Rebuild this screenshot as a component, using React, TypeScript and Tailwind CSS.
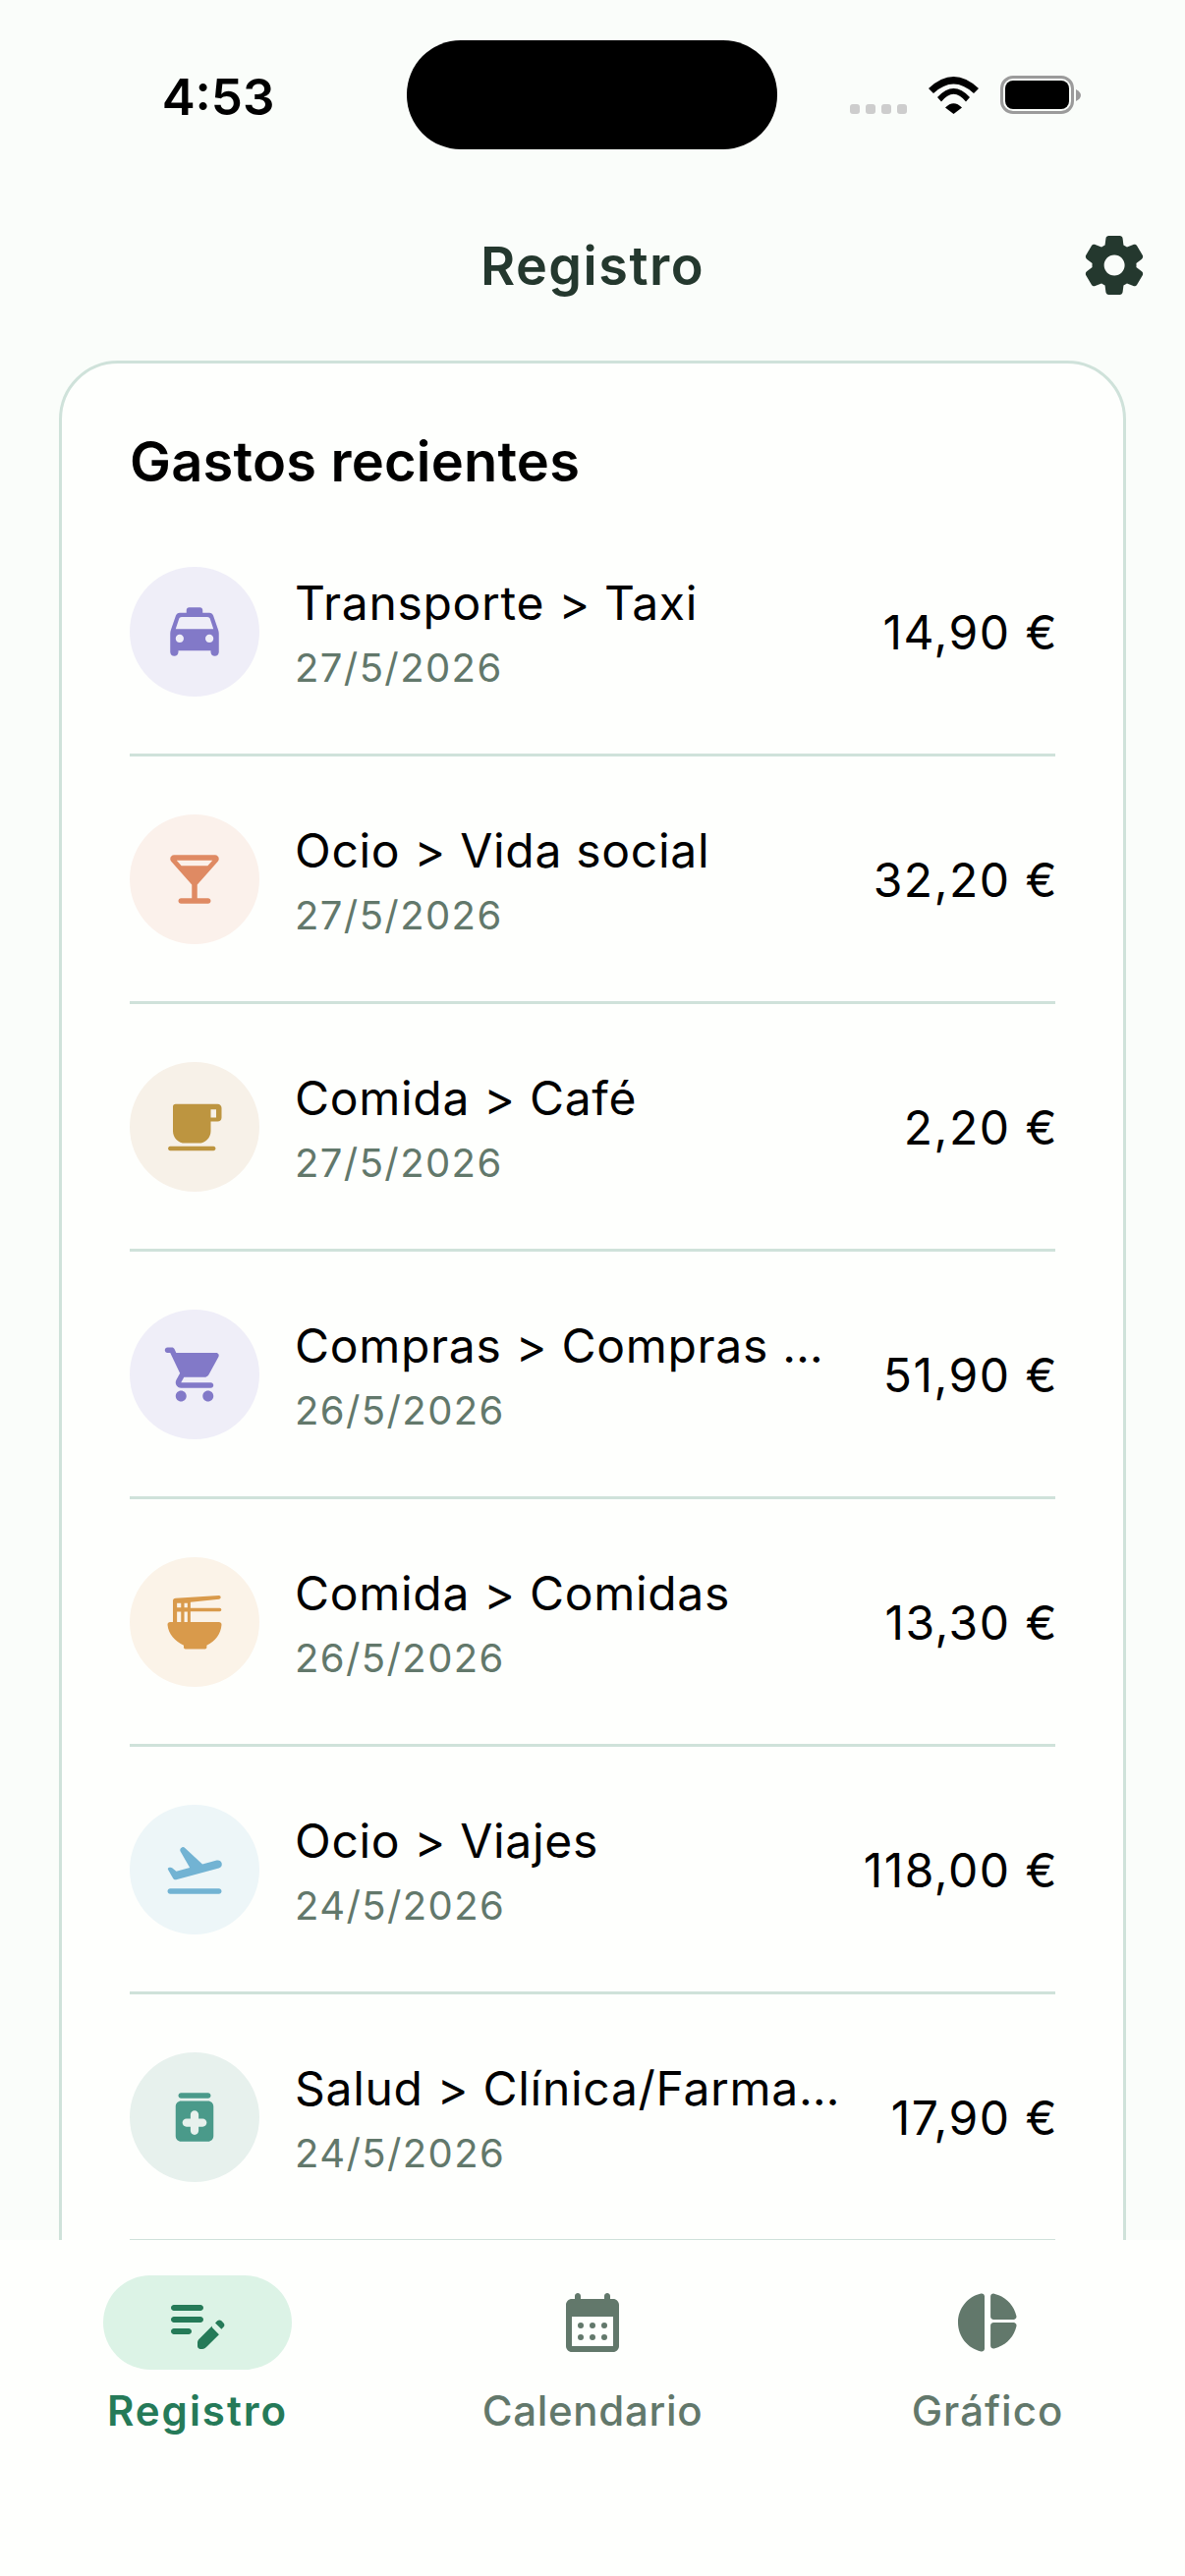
type Row = { d: string; bg: string; color: string; name: string; date: string; amount: string };

const taxi = "M18.920 6.010C18.720 5.420 18.160 5 17.500 5H15V4c0-.550-.450-1-1-1h-4c-.550 0-1 .450-1 1v1H6.500c-.660 0-1.210.420-1.420 1.010L3.260 11.240c-.170.480-.260.980-.260 1.490V19.500c0 .830.670 1.500 1.500 1.500S6 20.330 6 19.500V19h12v.500c0 .820.670 1.500 1.500 1.500.820 0 1.500-.670 1.500-1.500v-6.770c0-.500-.090-1.010-.260-1.490l-1.820-5.230zM6.500 16c-.830 0-1.500-.670-1.500-1.500S5.670 13 6.500 13s1.500.670 1.500 1.500S7.330 16 6.500 16zm11 0c-.830 0-1.500-.670-1.500-1.500s.670-1.500 1.500-1.500 1.500.670 1.500 1.500-.670 1.500-1.500 1.500zM5 11l1.270-3.820c.140-.400.520-.680.950-.680h9.560c.430 0 .810.280.950.680L19 11H5z";
const bar = "M21 4.410C21 3.630 20.370 3 19.590 3H4.410C3.630 3 3 3.630 3 4.410c0 .340.120.670.350.920L11 14v5H7c-.550 0-1 .450-1 1s.450 1 1 1h10c.550 0 1-.450 1-1s-.450-1-1-1h-4v-5l7.650-8.670c.230-.250.350-.580.350-.920zM7.140 7l-1.770-2h13.270l-1.780 2H7.140z";
const cafe = "M5 3.500H20.500c.900 0 1.500.600 1.500 1.500v3.500c0 .900-.600 1.500-1.500 1.500H18v3.500c0 2.500-2 4.500-4.500 4.500H8.500C6 18 4 16 4 13.500V4.500c0-.600.400-1 1-1zM18 5.500v3h2v-3zM3 19.200h16c.500 0 .800.400.800.800s-.300.800-.800.800H3c-.500 0-.800-.400-.800-.800s.300-.800.800-.800z";
const cart = "M7 18c-1.100 0-1.990.900-1.990 2S5.900 22 7 22s2-.900 2-2-.900-2-2-2zM1 3c0 .550.450 1 1 1h1l3.600 7.590-1.350 2.440C4.520 15.370 5.480 17 7 17h11c.550 0 1-.450 1-1s-.450-1-1-1H7l1.100-2h7.450c.750 0 1.410-.410 1.750-1.030l3.580-6.490c.370-.660-.110-1.480-.870-1.480H5.210l-.670-1.430c-.160-.350-.520-.570-.900-.570H2c-.550 0-1 .450-1 1zm16 15c-1.100 0-1.990.900-1.990 2s.890 2 1.990 2 2-.900 2-2-.900-2-2-2z";
const ramen = "M5 3.200L21 2.200a.650 .650 0 0 1 .100 1.300L10.500 4.600V6.800H21.300a.650 .650 0 0 1 0 1.300H10.500V12H21c.600 0 1 .400 1 1-.300 3.400-2.300 6.100-5.500 7.600v.800c0 .400-.300.600-.600.600H8.600c-.300 0-.600-.200-.600-.600v-.800C4.800 19.100 2.300 16.400 2 13c0-.600.400-1 1-1h1V4.200c0-.600.400-1 1-1zM5.500 5v1.600H7V5zM8.200 5v1.600H9.400V5zM5.500 8.200V12H7V8.200zM8.200 8.200V12H9.400V8.200z";
const plane = "M3 19h18c.550 0 1 .450 1 1s-.450 1-1 1H3c-.550 0-1-.450-1-1s.450-1 1-1zm19.070-9.360c-.220-.800-1.040-1.270-1.840-1.060L14.920 10 8.450 3.970c-.270-.260-.660-.350-1.020-.250-.680.180-1 .960-.650 1.570l3.450 5.980-4.970 1.330-1.570-1.240c-.250-.190-.570-.260-.880-.180l-.320.090c-.320.080-.470.450-.300.730l1.880 3.250c.230.390.690.580 1.120.470L21 11.480c.800-.220 1.280-1.040 1.070-1.840z";
const med = "M17 3H7c-.550 0-1 .450-1 1s.450 1 1 1h10c.550 0 1-.450 1-1s-.450-1-1-1zm0 3H7c-1.100 0-2 .900-2 2v11c0 1.100.900 2 2 2h10c1.100 0 2-.900 2-2V8c0-1.100-.900-2-2-2zm-2 9.500h-1.500V17c0 .830-.670 1.500-1.500 1.500s-1.500-.670-1.500-1.500v-1.500H9c-.830 0-1.500-.670-1.500-1.500s.670-1.500 1.500-1.500h1.500V11c0-.830.670-1.500 1.500-1.500s1.500.670 1.500 1.500v1.500H15c.830 0 1.500.670 1.500 1.500s-.670 1.500-1.500 1.500z";
const editNote = "M14 11c0 .550-.450 1-1 1H4c-.550 0-1-.450-1-1s.450-1 1-1h9c.550 0 1 .450 1 1zM3 7c0 .550.450 1 1 1h9c.550 0 1-.450 1-1s-.450-1-1-1H4c-.550 0-1 .450-1 1zm7 8c0-.550-.450-1-1-1H4c-.550 0-1 .450-1 1s.450 1 1 1h5c.550 0 1-.450 1-1zm8.010-2.870l.710-.710c.390-.390 1.020-.390 1.410 0l.710.710c.390.390.390 1.020 0 1.410l-.710.710-2.120-2.120zm-1.060 1.060l-4.300 4.300c-.200.200-.650.650-.650 1.350V20c0 .550.450 1 1 1h.650c.630 0 1.100-.400 1.350-.650l4.300-4.300-2.350-2.350z";
const calendar = "M19 4h-1V3c0-.550-.450-1-1-1s-1 .450-1 1v1H8V3c0-.550-.450-1-1-1s-1 .450-1 1v1H5C3.890 4 3 4.900 3 6v14c0 1.100.890 2 2 2h14c1.100 0 2-.900 2-2V6c0-1.100-.900-2-2-2zM5 10h14v10H5zM7 13a1 1 0 1 0 2 0a1 1 0 1 0-2 0zM11 13a1 1 0 1 0 2 0a1 1 0 1 0-2 0zM15 13a1 1 0 1 0 2 0a1 1 0 1 0-2 0zM7 17a1 1 0 1 0 2 0a1 1 0 1 0-2 0zM11 17a1 1 0 1 0 2 0a1 1 0 1 0-2 0zM15 17a1 1 0 1 0 2 0a1 1 0 1 0-2 0z";
const pie = "M11 3.180v17.640c0 .640-.590 1.120-1.210.980C5.320 20.800 2 16.790 2 12s3.320-8.800 7.790-9.800c.620-.140 1.210.340 1.210.980zm2.030 0v6.810c0 .550.450 1 1 1h6.790c.640 0 1.120-.590.980-1.220-.850-3.760-3.800-6.690-7.550-7.550-.630-.140-1.220.340-1.220.960zm0 9.830v6.810c0 .640.590 1.120 1.220.980 3.760-.860 6.720-3.810 7.570-7.570.140-.620-.350-1.220-.980-1.220h-6.800c-.560 0-1.010.450-1.010 1z";
const settings = "M19.500 12c0-.230-.010-.450-.030-.680l1.860-1.410c.400-.300.510-.860.260-1.300l-1.870-3.230c-.250-.440-.790-.620-1.250-.420l-2.150.910c-.370-.260-.760-.490-1.170-.680l-.290-2.310c-.060-.500-.490-.880-.990-.880h-3.730c-.510 0-.940.380-1 .880l-.290 2.310c-.410.190-.800.420-1.170.680l-2.150-.910c-.460-.200-1-.020-1.250.420L2.410 8.620c-.250.440-.140.990.260 1.300l1.860 1.410c-.020.220-.030.440-.030.670s.010.450.030.680l-1.860 1.410c-.400.300-.510.860-.260 1.300l1.870 3.230c.250.440.790.620 1.250.420l2.150-.910c.370.260.760.490 1.170.680l.290 2.310c.060.500.490.880.990.880h3.740c.500 0 .930-.380.990-.880l.290-2.310c.410-.190.800-.420 1.170-.680l2.150.910c.460.200 1 .020 1.250-.420l1.870-3.230c.250-.440.140-.990-.260-1.300l-1.860-1.410c.030-.230.040-.450.040-.680zm-7.460 3.500c-1.930 0-3.500-1.570-3.500-3.500s1.570-3.500 3.500-3.500 3.500 1.570 3.500 3.500-1.570 3.500-3.500 3.500z";

const rows: Row[] = [
  { d: taxi, bg: "bg-[#efeef8]", color: "text-[#8279c8]", name: "Transporte > Taxi", date: "27/5/2026", amount: "14,90 €" },
  { d: bar, bg: "bg-[#fbf1eb]", color: "text-[#df8a63]", name: "Ocio > Vida social", date: "27/5/2026", amount: "32,20 €" },
  { d: cafe, bg: "bg-[#f7f1e8]", color: "text-[#bd9540]", name: "Comida > Café", date: "27/5/2026", amount: "2,20 €" },
  { d: cart, bg: "bg-[#efeef8]", color: "text-[#8279c8]", name: "Compras > Compras online", date: "26/5/2026", amount: "51,90 €" },
  { d: ramen, bg: "bg-[#fbf3e8]", color: "text-[#d99a4b]", name: "Comida > Comidas", date: "26/5/2026", amount: "13,30 €" },
  { d: plane, bg: "bg-[#edf6f8]", color: "text-[#72b3d3]", name: "Ocio > Viajes", date: "24/5/2026", amount: "118,00 €" },
  { d: med, bg: "bg-[#e7f1ed]", color: "text-[#4a9a8a]", name: "Salud > Clínica/Farmacia", date: "24/5/2026", amount: "17,90 €" },
];

function Icon({ d, size, className }: { d: string; size: number; className?: string }) {
  return (
    <svg width={size} height={size} viewBox="0 0 24 24" className={className}>
      <path fill="currentColor" fillRule="evenodd" d={d} />
    </svg>
  );
}

function Wifi() {
  return (
    <svg width="51" height="38" viewBox="0 0 51 38" className="block shrink-0">
      <path fill="#000" d="M0 12Q25.500 -12 51 12L46 17Q25.500 -2 5 17Z" />
      <path fill="#000" d="M9 21Q25.500 3 42 21L38 25.500Q25.500 10 13 25.500Z" />
      <path fill="#000" d="M17 31.500Q25.500 23 34 31.500L25.500 38Z" />
    </svg>
  );
}

function Battery() {
  return (
    <div className="flex items-center gap-[2px] shrink-0">
      <div className="w-[75px] h-[39px] rounded-[13px] border-[3px] border-[#9b9b9b] p-[2px]">
        <div className="w-full h-full rounded-[8px] bg-black" />
      </div>
      <svg width="5" height="12" viewBox="0 0 5 12" className="block">
        <path fill="#9b9b9b" d="M0 0C3 1.500 5 3.500 5 6S3 10.500 0 12Z" />
      </svg>
    </div>
  );
}

const dots = [0, 1, 2, 3];

export default function App() {
  return (
    <div className="w-[1206px] h-[2622px] flex flex-col overflow-hidden bg-[#fafdfa] font-['Inter',sans-serif]">
      <div className="h-[198px] shrink-0 flex items-start pt-[41px]">
        <div className="w-[414px] h-[111px] flex items-center justify-center pl-[30px]">
          <span className="text-[51px] font-semibold text-black leading-none mt-[3px]">4:53</span>
        </div>
        <div className="w-[377px] h-[111px] rounded-[55px] bg-black" />
        <div className="flex-1 h-[111px] flex items-center pl-[74px]">
          <div className="flex gap-[6px] mt-[29px] mr-[22px]">
            {dots.map((d) => (
              <span key={d} className="w-[10px] h-[10px] rounded-[3px] bg-[#cdcdcd]" />
            ))}
          </div>
          <Wifi />
          <div className="ml-[22px]">
            <Battery />
          </div>
        </div>
      </div>

      <div className="h-[169px] shrink-0 relative flex items-start justify-center pt-[42px]">
        <span className="text-[54px] leading-[62px] font-semibold tracking-[1.5px] text-[#24382e]">Registro</span>
        <Icon d={settings} size={72} className="absolute right-[36px] top-[36px] text-[#24382e]" />
      </div>

      <div className="flex-1 min-h-0 overflow-hidden px-[60px]">
        <div className="rounded-t-[60px] border-[3px] border-[#cfe2da] bg-[#fefffd] px-[69px] pt-[67px]">
          <h2 className="text-[56px] leading-[66px] font-semibold tracking-[0.2px] text-black">Gastos recientes</h2>
          <div className="mt-[15px]">
            {rows.map((r) => (
              <div key={r.name} className="h-[252px] flex items-center border-b-[3px] border-[#cfe2da]">
                <div className={`w-[132px] h-[132px] shrink-0 rounded-full flex items-center justify-center ${r.bg} ${r.color}`}>
                  <Icon d={r.d} size={66} />
                </div>
                <div className="ml-[36px] flex-1 min-w-0 pt-[5px]">
                  <div className="text-[48px] leading-[60px] text-black tracking-[0.7px] truncate">{r.name}</div>
                  <div className="text-[40px] leading-[52px] text-[#62786b] tracking-[1.4px] mt-[10px]">{r.date}</div>
                </div>
                <div className="ml-[40px] mr-[-3px] pt-[2px] shrink-0 text-[48px] text-black tracking-[1.5px]">{r.amount}</div>
              </div>
            ))}
          </div>
        </div>
      </div>

      <div className="h-[342px] shrink-0 bg-[#fefffd] grid grid-cols-3 pt-[36px]">
        <div className="flex flex-col items-center">
          <div className="w-[192px] h-[96px] rounded-[48px] bg-[#dcf3e6] flex items-center justify-center text-[#257a58]">
            <Icon d={editNote} size={72} />
          </div>
          <span className="mt-[16px] text-[42px] leading-[52px] font-semibold tracking-[2px] text-[#257a58]">Registro</span>
        </div>
        <div className="flex flex-col items-center text-[#62786b]">
          <div className="h-[96px] flex items-center justify-center"><Icon d={calendar} size={72} /></div>
          <span className="mt-[16px] text-[42px] leading-[52px] font-medium tracking-[0.7px]">Calendario</span>
        </div>
        <div className="flex flex-col items-center text-[#62786b]">
          <div className="h-[96px] flex items-center justify-center"><Icon d={pie} size={72} /></div>
          <span className="mt-[16px] text-[42px] leading-[52px] font-medium tracking-[1px]">Gráfico</span>
        </div>
      </div>
    </div>
  );
}
